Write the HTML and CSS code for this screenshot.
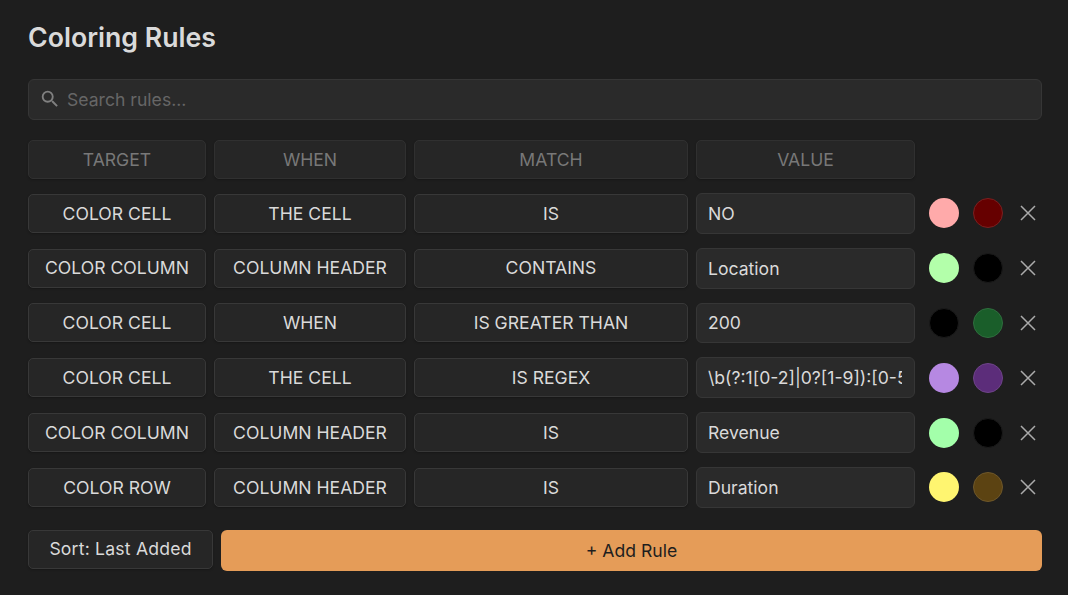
FILE: index.html
```html
<!DOCTYPE html>
<html lang="en">
<head>
<meta charset="utf-8">
<title>Coloring Rules</title>
<link rel="stylesheet" href="styles.css">
</head>
<body>
<main class="panel">
  <h1 class="title">Coloring Rules</h1>
  <label class="search">
    <svg class="search-icon" viewBox="0 0 24 24" aria-hidden="true"><path d="M15.5 14h-.79l-.28-.27A6.471 6.471 0 0 0 16 9.5 6.5 6.5 0 1 0 9.5 16c1.61 0 3.09-.59 4.23-1.57l.27.28v.79l5 4.99L20.49 19l-4.99-5zm-6 0C7.01 14 5 11.99 5 9.5S7.01 5 9.5 5 14 7.01 14 9.5 11.99 14 9.5 14z"/></svg>
    <input class="search-input" type="text" placeholder="Search rules...">
  </label>
  <div class="rule header">
    <div class="cell head">TARGET</div>
    <div class="cell head">WHEN</div>
    <div class="cell head">MATCH</div>
    <div class="cell head">VALUE</div>
  </div>
  <div class="rules">
    <div class="rule">
      <button class="cell">COLOR CELL</button><button class="cell">THE CELL</button><button class="cell">IS</button>
      <input class="value" type="text" value="NO">
      <div class="actions"><span class="swatch fg-red"></span><span class="swatch bg-red"></span><svg class="close" viewBox="0 0 16 16" aria-hidden="true"><path d="M1 1 15 15M15 1 1 15"/></svg></div>
    </div>
    <div class="rule">
      <button class="cell">COLOR COLUMN</button><button class="cell">COLUMN HEADER</button><button class="cell">CONTAINS</button>
      <input class="value" type="text" value="Location">
      <div class="actions"><span class="swatch fg-lime"></span><span class="swatch bg-black"></span><svg class="close" viewBox="0 0 16 16" aria-hidden="true"><path d="M1 1 15 15M15 1 1 15"/></svg></div>
    </div>
    <div class="rule">
      <button class="cell">COLOR CELL</button><button class="cell">WHEN</button><button class="cell">IS GREATER THAN</button>
      <input class="value" type="text" value="200">
      <div class="actions"><span class="swatch bg-black"></span><span class="swatch bg-green"></span><svg class="close" viewBox="0 0 16 16" aria-hidden="true"><path d="M1 1 15 15M15 1 1 15"/></svg></div>
    </div>
    <div class="rule">
      <button class="cell">COLOR CELL</button><button class="cell">THE CELL</button><button class="cell">IS REGEX</button>
      <input class="value" type="text" value="\b(?:1[0-2]|0?[1-9]):[0-5][0-9]\b">
      <div class="actions"><span class="swatch fg-purple"></span><span class="swatch bg-purple"></span><svg class="close" viewBox="0 0 16 16" aria-hidden="true"><path d="M1 1 15 15M15 1 1 15"/></svg></div>
    </div>
    <div class="rule">
      <button class="cell">COLOR COLUMN</button><button class="cell">COLUMN HEADER</button><button class="cell">IS</button>
      <input class="value" type="text" value="Revenue">
      <div class="actions"><span class="swatch fg-mint"></span><span class="swatch bg-black"></span><svg class="close" viewBox="0 0 16 16" aria-hidden="true"><path d="M1 1 15 15M15 1 1 15"/></svg></div>
    </div>
    <div class="rule">
      <button class="cell">COLOR ROW</button><button class="cell">COLUMN HEADER</button><button class="cell">IS</button>
      <input class="value" type="text" value="Duration">
      <div class="actions"><span class="swatch fg-yellow"></span><span class="swatch bg-brown"></span><svg class="close" viewBox="0 0 16 16" aria-hidden="true"><path d="M1 1 15 15M15 1 1 15"/></svg></div>
    </div>
  </div>
  <div class="footer">
    <button class="cell sort">Sort: Last Added</button>
    <button class="add">+ Add Rule</button>
  </div>
</main>
</body>
</html>
```

FILE: styles.css
```css
* { box-sizing: border-box; }
html, body { margin: 0; height: 100%; }
body {
  background: #1e1e1e;
  color: #dadada;
  font-family: Inter, "Liberation Sans", sans-serif;
  font-size: 17.6px;
  overflow: hidden;
}
.panel { padding: 21px 26px 24px 28px; }
.title {
  margin: 0;
  font-size: 26.7px;
  font-weight: 600;
  line-height: 32px;
  color: #dadada;
}
.search {
  position: relative;
  display: block;
  margin-top: 26px;
}
.search-icon {
  position: absolute;
  left: 11px;
  top: 9px;
  width: 22px;
  height: 22px;
  fill: #808080;
}
.search-input {
  display: block;
  width: 100%;
  height: 41px;
  padding: 0 12px 0 38px;
  background: #2a2a2a;
  border: 1px solid #363636;
  border-radius: 6px;
  color: #dadada;
  font: inherit;
  outline: none;
}
.search-input::placeholder { color: #666; opacity: 1; }
.rule {
  display: grid;
  grid-template-columns: 178px 192px 274px 219px auto;
  column-gap: 8px;
  align-items: center;
}
.header { margin-top: 20px; }
.rules {
  display: flex;
  flex-direction: column;
  gap: 14px;
  margin-top: 14px;
}
.rules .rule { height: 40.8px; }
.cell {
  display: flex;
  align-items: center;
  justify-content: center;
  height: 39px;
  padding: 0 0 .4px;
  background: #262626;
  border: 1px solid #383838;
  border-radius: 5px;
  box-shadow: 0 1px 2px rgba(0, 0, 0, .25);
  color: #dadada;
  font: inherit;
  white-space: nowrap;
}
.head { padding: 0 0 1px; color: #787878; border-color: #303030; }
.value {
  width: 100%;
  height: 100%;
  padding: 0 12px 0 11px;
  background: #2a2a2a;
  border: 1px solid #363636;
  border-radius: 6px;
  color: #dadada;
  font: inherit;
  outline: none;
}
.actions {
  display: flex;
  align-items: center;
  gap: 14px;
  margin-left: 6px;
}
.swatch {
  display: block;
  width: 30px;
  height: 30px;
  border-radius: 50%;
  border: 1px solid transparent;
  background-clip: border-box;
}
.fg-red { background: #ffaaaa; }
.bg-red { background: #660000; border-color: #7a2020; }
.fg-lime { background: #b3ffaa; }
.bg-black { background: #000; border-color: #1a1a1a; }
.bg-green { background: #1a5e2a; border-color: #2f6e3e; }
.fg-purple { background: #b688e2; }
.bg-purple { background: #5c2d7a; border-color: #6e4488; }
.fg-mint { background: #a3ffaa; }
.fg-yellow { background: #fff570; }
.bg-brown { background: #5c4312; border-color: #6e572a; }
.close {
  width: 16px;
  height: 16px;
  margin-left: 3px;
  fill: none;
  stroke: #ababab;
  stroke-width: 1.5;
}
.footer {
  display: flex;
  gap: 8px;
  align-items: flex-start;
  margin-top: 22.4px;
}
.sort { width: 185px; flex: none; padding: 0 0 2px; letter-spacing: .2px; }
.add {
  flex: 1;
  height: 41px;
  padding: 0;
  background: #e59c58;
  border: 0;
  border-radius: 6px;
  color: #1e1e1e;
  font: inherit;
}
```
